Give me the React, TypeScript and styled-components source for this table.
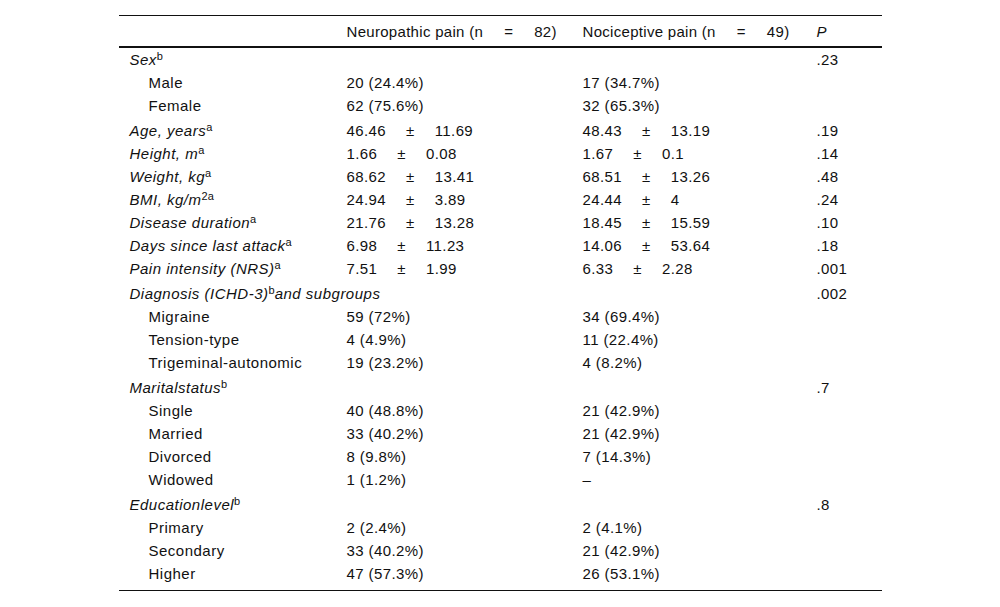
import React from 'react';
import styled, { createGlobalStyle } from 'styled-components';

type Row = {
  label: React.ReactNode;
  sub?: boolean;
  spaced?: boolean;
  neuro?: React.ReactNode;
  noci?: React.ReactNode;
  p?: string;
};

const GlobalStyle = createGlobalStyle`
  html, body {
    margin: 0;
    padding: 0;
    background: #ffffff;
  }
  body {
    font-family: "Liberation Sans", Arial, sans-serif;
    color: #111;
  }
`;

const Page = styled.div`
  padding-top: 15px;
  width: 1000px;
`;

const Table = styled.table`
  width: 763px;
  margin: 0 auto;
  border-collapse: collapse;
  table-layout: fixed;
  font-size: 15px;
  border-top: 1px solid #111;
  border-bottom: 1px solid #111;
`;

const HeadCell = styled.th<{ $italic?: boolean }>`
  height: 30px;
  padding: 0 0 0 10px;
  text-align: left;
  font-weight: normal;
  font-style: ${({ $italic }) => ($italic ? 'italic' : 'normal')};
  letter-spacing: 0.3px;
  vertical-align: middle;
  white-space: nowrap;
  border-bottom: 2px solid #111;
`;

const BodyRow = styled.tr<{ $spaced?: boolean; $last?: boolean }>`
  & > td {
    height: 23px;
    padding-top: ${({ $spaced }) => ($spaced ? '2px' : '0')};
    padding-bottom: ${({ $last }) => ($last ? '5px' : '0')};
  }
`;

const Cell = styled.td`
  padding-left: 10px;
  vertical-align: middle;
  white-space: nowrap;
  line-height: 23px;
  letter-spacing: 0.4px;
`;

const LabelCell = styled(Cell)<{ $sub?: boolean }>`
  padding-left: ${({ $sub }) => ($sub ? '30px' : '11px')};
  font-style: ${({ $sub }) => ($sub ? 'normal' : 'italic')};
  letter-spacing: 0.5px;
`;

const Sup = styled.sup`
  font-size: 11px;
  font-style: normal;
  letter-spacing: 0;
  vertical-align: 5px;
  line-height: 0;
`;

const Op = styled.span`
  display: inline-block;
  margin: 0 20px;
`;

const Eq = styled.span`
  display: inline-block;
  margin: 0 21px;
`;

const Stat = ({ m, sd }: { m: string; sd: string }) => (
  <>
    {m}
    <Op>±</Op>
    {sd}
  </>
);

const rows: Row[] = [
  { label: <>Sex<Sup>b</Sup></>, p: '.23' },
  { label: 'Male', sub: true, neuro: '20 (24.4%)', noci: '17 (34.7%)' },
  { label: 'Female', sub: true, neuro: '62 (75.6%)', noci: '32 (65.3%)' },
  { label: <>Age, years<Sup>a</Sup></>, spaced: true, neuro: <Stat m="46.46" sd="11.69" />, noci: <Stat m="48.43" sd="13.19" />, p: '.19' },
  { label: <>Height, m<Sup>a</Sup></>, neuro: <Stat m="1.66" sd="0.08" />, noci: <Stat m="1.67" sd="0.1" />, p: '.14' },
  { label: <>Weight, kg<Sup>a</Sup></>, neuro: <Stat m="68.62" sd="13.41" />, noci: <Stat m="68.51" sd="13.26" />, p: '.48' },
  { label: <>BMI, kg/m<Sup>2a</Sup></>, neuro: <Stat m="24.94" sd="3.89" />, noci: <Stat m="24.44" sd="4" />, p: '.24' },
  { label: <>Disease duration<Sup>a</Sup></>, neuro: <Stat m="21.76" sd="13.28" />, noci: <Stat m="18.45" sd="15.59" />, p: '.10' },
  { label: <>Days since last attack<Sup>a</Sup></>, neuro: <Stat m="6.98" sd="11.23" />, noci: <Stat m="14.06" sd="53.64" />, p: '.18' },
  { label: <>Pain intensity (NRS)<Sup>a</Sup></>, neuro: <Stat m="7.51" sd="1.99" />, noci: <Stat m="6.33" sd="2.28" />, p: '.001' },
  { label: <>Diagnosis (ICHD-3)<Sup>b</Sup>and subgroups</>, spaced: true, p: '.002' },
  { label: 'Migraine', sub: true, neuro: '59 (72%)', noci: '34 (69.4%)' },
  { label: 'Tension-type', sub: true, neuro: '4 (4.9%)', noci: '11 (22.4%)' },
  { label: 'Trigeminal-autonomic', sub: true, neuro: '19 (23.2%)', noci: '4 (8.2%)' },
  { label: <>Maritalstatus<Sup>b</Sup></>, spaced: true, p: '.7' },
  { label: 'Single', sub: true, neuro: '40 (48.8%)', noci: '21 (42.9%)' },
  { label: 'Married', sub: true, neuro: '33 (40.2%)', noci: '21 (42.9%)' },
  { label: 'Divorced', sub: true, neuro: '8 (9.8%)', noci: '7 (14.3%)' },
  { label: 'Widowed', sub: true, neuro: '1 (1.2%)', noci: '–' },
  { label: <>Educationlevel<Sup>b</Sup></>, spaced: true, p: '.8' },
  { label: 'Primary', sub: true, neuro: '2 (2.4%)', noci: '2 (4.1%)' },
  { label: 'Secondary', sub: true, neuro: '33 (40.2%)', noci: '21 (42.9%)' },
  { label: 'Higher', sub: true, neuro: '47 (57.3%)', noci: '26 (53.1%)' },
];

export default function App() {
  return (
    <Page>
      <GlobalStyle />
      <Table>
        <colgroup>
          <col style={{ width: 218 }} />
          <col style={{ width: 236 }} />
          <col style={{ width: 234 }} />
          <col style={{ width: 75 }} />
        </colgroup>
        <thead>
          <tr>
            <HeadCell />
            <HeadCell>
              Neuropathic pain (n<Eq>=</Eq>82)
            </HeadCell>
            <HeadCell>
              Nociceptive pain (n<Eq>=</Eq>49)
            </HeadCell>
            <HeadCell $italic>P</HeadCell>
          </tr>
        </thead>
        <tbody>
          {rows.map((r, i) => (
            <BodyRow key={i} $spaced={r.spaced} $last={i === rows.length - 1}>
              <LabelCell $sub={r.sub}>{r.label}</LabelCell>
              <Cell>{r.neuro}</Cell>
              <Cell>{r.noci}</Cell>
              <Cell>{r.p}</Cell>
            </BodyRow>
          ))}
        </tbody>
      </Table>
    </Page>
  );
}
